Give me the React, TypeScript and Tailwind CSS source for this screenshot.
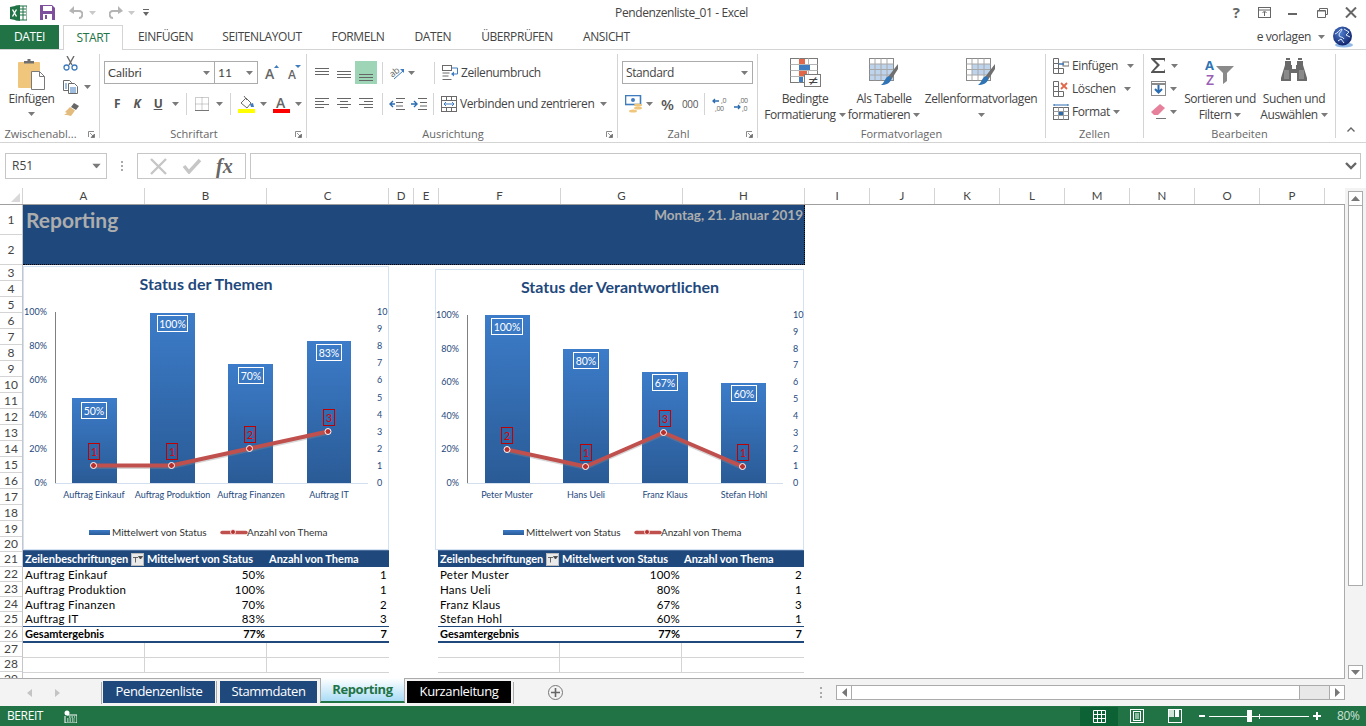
import type { ReactNode } from "react";

// ───── small helpers ─────
function Caret({ className = "" }: { className?: string }) {
  return (
    <svg width="7" height="4" viewBox="0 0 7 4" className={`shrink-0 ${className}`}>
      <path d="M0 0h7L3.5 4z" fill="#7a7a7a" />
    </svg>
  );
}

function Sep({ className = "" }: { className?: string }) {
  return <div className={`w-px h-[22px] bg-[#d4d4d4] shrink-0 ${className}`} />;
}

function Launcher() {
  return (
    <svg width="7" height="7" viewBox="0 0 7 7" className="shrink-0">
      <path d="M0.5 6V0.5H6" fill="none" stroke="#8a8a8a" />
      <path d="M2 2l3.5 3.5M6.5 3v3.5H3z" fill="#6a6a6a" stroke="#6a6a6a" strokeWidth="0.7" />
    </svg>
  );
}

function Lines({ rows, className = "" }: { rows: [number, number, number][]; className?: string }) {
  return (
    <svg width="14" height="16" viewBox="0 0 14 16" className={`shrink-0 ${className}`}>
      {rows.map(([a, b, y], i) => (
        <line key={i} x1={a} x2={b} y1={y + 0.5} y2={y + 0.5} stroke="#666" />
      ))}
    </svg>
  );
}

// ───── ribbon icons ─────
function PasteIcon() {
  return (
    <svg width="30" height="34" viewBox="0 0 30 34">
      <rect x="1" y="4" width="22" height="26" rx="1" fill="#efc67b" />
      <path d="M7 5V3h3.5V1h3v2H17v2.5H7z" fill="#6f6f6f" />
      <path d="M14.5 13.5h8l5 5v13h-13z" fill="#fff" stroke="#7a7a7a" />
      <path d="M22.5 13.5v5h5" fill="none" stroke="#7a7a7a" />
    </svg>
  );
}
function CutIcon() {
  return (
    <svg width="15" height="15" viewBox="0 0 15 15">
      <path d="M4 0l5 9M11 0L6 9" stroke="#6a6a6a" strokeWidth="1.4" fill="none" />
      <circle cx="3.5" cy="11.5" r="2.5" fill="none" stroke="#3f7cbf" strokeWidth="1.3" />
      <circle cx="11.5" cy="11.5" r="2.5" fill="none" stroke="#3f7cbf" strokeWidth="1.3" />
    </svg>
  );
}
function CopyIcon() {
  return (
    <svg width="15" height="14" viewBox="0 0 15 14">
      <path d="M.5.5h6l2 2v8h-8z" fill="#fff" stroke="#6a6a6a" />
      <path d="M5.5 3.5h6l3 3v7h-9z" fill="#fff" stroke="#6a6a6a" />
      <path d="M2 4h2M2 6h2M2 8h2M7 8h6M7 10h6M7 12h6" stroke="#3f7cbf" />
    </svg>
  );
}
function BrushIcon() {
  return (
    <svg width="17" height="14" viewBox="0 0 17 14">
      <path d="M11 0l5 3-3 4-5-3z" fill="#666" />
      <path d="M7 4l5 3.5L8 13 4 12l-3 0 3-2-2-1z" fill="#e3bc7d" />
    </svg>
  );
}
function GrowIcon({ up }: { up: boolean }) {
  return (
    <svg width="14" height="15" viewBox="0 0 14 15" className="overflow-visible">
      {up ? <path d="M9 3l2.5-3L14 3z" fill="#3f7cbf" /> : <path d="M8 0h6l-3 3z" fill="#3f7cbf" />}
      <text x={up ? 0 : 1} y="14" fontSize={up ? 14 : 12} fontWeight="600" fill="#666" fontFamily="Open Sans, sans-serif">A</text>
    </svg>
  );
}
function BordersIcon() {
  return (
    <svg width="14" height="14" viewBox="0 0 14 14">
      <rect x=".5" y=".5" width="13" height="13" fill="none" stroke="#9a9a9a" strokeDasharray="1 1" />
      <path d="M7 .5v13M.5 7h13" stroke="#9a9a9a" strokeDasharray="1 1" />
      <path d="M0 13.5h14" stroke="#777" />
    </svg>
  );
}
function FillIcon() {
  return (
    <svg width="17" height="17" viewBox="0 0 17 17">
      <path d="M3 7l5-5 5 5-4 5z" fill="#fff" stroke="#6a6a6a" />
      <path d="M6 0l3 4" stroke="#6a6a6a" />
      <path d="M12 8l3-1 1 4h-3z" fill="#3f7cbf" />
      <rect y="13" width="17" height="4" fill="#ffff00" />
    </svg>
  );
}
function ColorAIcon() {
  return (
    <svg width="17" height="17" viewBox="0 0 17 17" className="overflow-visible">
      <text x="3" y="12" fontSize="14" fontWeight="600" fill="#666" fontFamily="Open Sans, sans-serif">A</text>
      <rect y="13" width="17" height="4" fill="#ff0000" />
    </svg>
  );
}
function OrientIcon() {
  return (
    <svg width="16" height="16" viewBox="0 0 16 16" className="overflow-visible">
      <text x="1" y="10" fontSize="9" fill="#666" transform="rotate(-38 6 8)" fontFamily="Open Sans, sans-serif">ab</text>
      <path d="M5 14l9-8" stroke="#3f7cbf" />
      <path d="M11 4h4v4z" fill="#3f7cbf" />
    </svg>
  );
}
function IndentIcon({ right }: { right?: boolean }) {
  return (
    <svg width="16" height="12" viewBox="0 0 16 12">
      <path d={right ? "M7 .5h9M9 4.5h7M9 8h7M7 11.5h9" : "M7 .5h9M7 4.5h7M7 8h7M7 11.5h9"} stroke="#666" />
      {right ? (
        <path d="M0 6h5M3 3l3 3-3 3" stroke="#2b6cb0" strokeWidth="1.4" fill="none" />
      ) : (
        <path d="M6 6H1M4 3L1 6l3 3" stroke="#2b6cb0" strokeWidth="1.4" fill="none" />
      )}
    </svg>
  );
}
function WrapIcon() {
  return (
    <svg width="16" height="16" viewBox="0 0 16 16">
      <rect x=".5" y=".5" width="9" height="5" fill="#fff" stroke="#6a6a6a" />
      <path d="M.5 8h7M.5 11h6M.5 14.5h9" stroke="#6a6a6a" />
      <path d="M10 3h5.5v6H10" fill="none" stroke="#3f7cbf" />
      <path d="M12 6.5L9 9l3 2.5z" fill="#3f7cbf" />
    </svg>
  );
}
function MergeIcon() {
  return (
    <svg width="16" height="16" viewBox="0 0 16 16">
      <rect x=".5" y=".5" width="15" height="15" fill="#fff" stroke="#6a6a6a" />
      <path d="M.5 4.5h15M.5 11.5h15M5.5.5v4M10.5.5v4M5.5 11.5v4M10.5 11.5v4" stroke="#6a6a6a" />
      <path d="M3 8h10M5 6L3 8l2 2M11 6l2 2-2 2" stroke="#3f7cbf" fill="none" />
    </svg>
  );
}
function CurrencyIcon() {
  return (
    <svg width="17" height="18" viewBox="0 0 17 18">
      <rect x=".5" y=".5" width="15" height="9" fill="#fff" stroke="#3f7cbf" strokeWidth="1.6" />
      <circle cx="8" cy="5" r="2" fill="#3f7cbf" />
      <ellipse cx="13" cy="10" rx="4" ry="1.6" fill="#efc67b" />
      <ellipse cx="13" cy="13" rx="4" ry="1.6" fill="#efc67b" />
      <ellipse cx="8" cy="16" rx="4" ry="1.6" fill="#efc67b" />
    </svg>
  );
}
function DecimalIcon({ more }: { more?: boolean }) {
  return (
    <svg width="15" height="15" viewBox="0 0 15 15" className="overflow-visible">
      {more ? (
        <>
          <text x="5" y="6" fontSize="7" fill="#666" fontFamily="Open Sans, sans-serif">,00</text>
          <text x="8" y="14" fontSize="7" fill="#666" fontFamily="Open Sans, sans-serif">,0</text>
          <path d="M0 10h6M4 8l2 2-2 2" stroke="#2b6cb0" strokeWidth="1.3" fill="none" />
        </>
      ) : (
        <>
          <text x="9" y="6" fontSize="7" fill="#666" fontFamily="Open Sans, sans-serif">,0</text>
          <text x="3" y="14" fontSize="7" fill="#666" fontFamily="Open Sans, sans-serif">,00</text>
          <path d="M7 4H1M3 2L1 4l2 2" stroke="#2b6cb0" strokeWidth="1.3" fill="none" />
        </>
      )}
    </svg>
  );
}
function CondFormatIcon() {
  return (
    <svg width="31" height="29" viewBox="0 0 31 29" className="overflow-visible">
      <rect x=".5" y=".5" width="27" height="24" fill="#fff" stroke="#7a7a7a" />
      <path d="M9.5 .5v24M18.5 .5v24M.5 6.5h27M.5 12.5h27M.5 18.5h27" stroke="#b5b5b5" />
      <rect x="9" y="1" width="6" height="5" fill="#e0674a" />
      <rect x="9" y="7" width="11" height="5" fill="#3f7cbf" />
      <rect x="9" y="13" width="8" height="5" fill="#e0674a" />
      <rect x="9" y="19" width="4" height="5" fill="#3f7cbf" />
      <rect x="14.5" y="16.5" width="16" height="12" fill="#fff" stroke="#7a7a7a" />
      <text x="18" y="27" fontSize="13" fill="#444" fontFamily="DejaVu Sans, sans-serif">≠</text>
    </svg>
  );
}
function TableStyleIcon({ second }: { second?: boolean }) {
  return (
    <svg width="30" height="28" viewBox="0 0 30 28">
      <rect x=".5" y=".5" width="24" height="22" fill="#fff" stroke="#8a8a8a" />
      {second ? (
        <rect x="6" y="6" width="18" height="11" fill="#bed3ec" />
      ) : (
        <rect x="1" y="6" width="23" height="16" fill="#bed3ec" />
      )}
      <path d="M6 .5v22M12 .5v22M18 .5v22M.5 6h24M.5 11.5h24M.5 17h24" stroke="#a8a8a8" />
      <path d="M29 6l-10 13 3 3L29 11z" fill="#6f6f6f" />
      <path d="M18 19c3-2 5 1 4 3-1 3-5 5-10 5 3-2 4-6 6-8z" fill="#2f75b5" />
    </svg>
  );
}
function CellsIcon({ kind }: { kind: "insert" | "delete" | "format" }) {
  return (
    <svg width="16" height="16" viewBox="0 0 16 16">
      {kind === "format" ? (
        <>
          <rect x=".5" y="3.5" width="15" height="12" fill="#fff" stroke="#6a6a6a" />
          <path d="M5.5 3.5v12M10.5 3.5v12M.5 7.5h15M.5 11.5h15" stroke="#9a9a9a" />
          <rect x="6" y="8" width="4" height="3" fill="#2b6cb0" />
          <path d="M1 1h14M1 0v2M15 0v2" stroke="#2b6cb0" />
        </>
      ) : (
        <>
          <path d="M.5.5h5v5h-5zM.5 5.5h5v5h-5zM.5 10.5h5v5h-5zM5.5 10.5h5v5h-5z" fill="#fff" stroke="#6a6a6a" />
          {kind === "insert" ? (
            <>
              <rect x="10" y="4" width="6" height="4" fill="#fff" stroke="#6a6a6a" />
              <path d="M6 6h5" stroke="#2b6cb0" strokeWidth="1.4" />
            </>
          ) : (
            <path d="M8 2l6 6M14 2L8 8" stroke="#e0674a" strokeWidth="1.8" />
          )}
        </>
      )}
    </svg>
  );
}
function SumIcon() {
  return (
    <svg width="15" height="15" viewBox="0 0 15 15">
      <path d="M0 0h14v4l-1-2H4l5 5-6 6h10l1-2v4H0v-1l6-7-6-6z" fill="#555" />
    </svg>
  );
}
function FillDownIcon() {
  return (
    <svg width="15" height="15" viewBox="0 0 15 15">
      <rect x=".5" y=".5" width="14" height="14" fill="#fff" stroke="#8a8a8a" />
      <path d="M.5 3h14" stroke="#8a8a8a" strokeWidth="2" />
      <path d="M7.5 4v7M4 8l3.5 3.5L11 8" stroke="#2b6cb0" strokeWidth="2" fill="none" />
    </svg>
  );
}
function EraserIcon() {
  return (
    <svg width="15" height="15" viewBox="0 0 15 15">
      <path d="M9 0l5 4-7 7H3L0 8z" fill="#e7819b" />
      <path d="M5 14.5h10" stroke="#777" />
    </svg>
  );
}
function SortIcon() {
  return (
    <svg width="30" height="28" viewBox="0 0 30 28" className="overflow-visible">
      <text x="0" y="12" fontSize="13" fontWeight="700" fill="#2f75b5" fontFamily="Open Sans, sans-serif">A</text>
      <text x="1" y="27" fontSize="14" fontWeight="600" fill="#9a5fb5" fontFamily="Open Sans, sans-serif">Z</text>
      <path d="M11 8h18l-7 7v8l-4 3V15z" fill="#8a8a8a" />
    </svg>
  );
}
function BinocularsIcon() {
  return (
    <svg width="26" height="24" viewBox="0 0 26 24" fill="#6a6a6a">
      <path d="M4 3h6v4h1v4h4V7h1V3h6v4l4 13v3H16v-8h-6v8H0v-3L4 7z" />
      <path d="M5 0h4v2H5zM17 0h4v2h-4z" />
      <path d="M3 12h5v9H3zM18 12h5v9h-5z" fill="#8a8a8a" />
    </svg>
  );
}
function GlobeIcon() {
  return (
    <svg width="22" height="22" viewBox="0 0 22 22">
      <defs>
        <radialGradient id="globe" cx="40%" cy="35%" r="70%">
          <stop offset="0" stopColor="#4f7fd0" />
          <stop offset="1" stopColor="#0f1f66" />
        </radialGradient>
      </defs>
      <ellipse cx="12" cy="19" rx="9" ry="2.5" fill="#8fb8e8" />
      <circle cx="10.5" cy="10" r="9.5" fill="url(#globe)" />
      <path d="M3 8c3-1 4-4 7-5 0 3-3 3-3 6s4 1 5 4M12 3l5 3-3 3 4 2M6 15l3-2 3 4" fill="none" stroke="#dfe9f8" strokeWidth="1" />
    </svg>
  );
}

// ───── title bar + tabs ─────
function TitleBar() {
  return (
    <div className="h-[25px] flex items-center relative shrink-0">
      <svg width="17" height="16" viewBox="0 0 17 16" className="ml-[10px]">
        <rect x="6" y="1" width="11" height="14" fill="#fff" stroke="#217346" />
        <path d="M10 4h6M10 7h6M10 10h6M13 1v14" stroke="#217346" />
        <path d="M0 2l10-2v16L0 14z" fill="#217346" />
        <path d="M2.5 4.5l4 7M6.5 4.5l-4 7" stroke="#fff" strokeWidth="1.4" />
      </svg>
      <svg width="15" height="15" viewBox="0 0 15 15" className="ml-[13px]">
        <path d="M0 0h12l3 3v12H0z" fill="#7d4f9d" />
        <rect x="3" y="1" width="9" height="5" fill="#fff" />
        <rect x="3" y="9" width="9" height="6" fill="#fff" />
        <rect x="5" y="10" width="2" height="4" fill="#7d4f9d" />
      </svg>
      <svg width="14" height="13" viewBox="0 0 14 13" className="ml-[14px]">
        <path d="M3 5h7c5 0 4 7 0 7" fill="none" stroke="#b4b4b4" strokeWidth="2" />
        <path d="M0 5l5-5v8z" fill="#b4b4b4" />
      </svg>
      <Caret className="ml-[6px] opacity-40" />
      <svg width="14" height="13" viewBox="0 0 14 13" className="ml-[13px]">
        <path d="M11 5H4c-5 0-4 7 0 7" fill="none" stroke="#b4b4b4" strokeWidth="2" />
        <path d="M14 5L9 0v8z" fill="#b4b4b4" />
      </svg>
      <Caret className="ml-[5px] opacity-40" />
      <svg width="6" height="7" viewBox="0 0 6 7" className="ml-[8px]">
        <path d="M0 0h6v1H0zM0 3h6L3 7z" fill="#666" />
      </svg>
      <div className="absolute left-0 right-0 top-0 h-[25px] flex items-center justify-center pr-[3px] text-[12px] tracking-[-0.4px] text-[#444] pointer-events-none">
        Pendenzenliste_01 - Excel
      </div>
      <div className="ml-auto flex items-center pr-[9px]">
        <span className="text-[15px] font-bold text-[#666] leading-none">?</span>
        <svg width="13" height="11" viewBox="0 0 13 11" className="ml-[18px]">
          <rect x=".5" y=".5" width="12" height="10" fill="none" stroke="#666" />
          <path d="M.5 3h12" stroke="#666" />
          <path d="M6.5 9V5M4.5 6l2-2 2 2" stroke="#666" fill="none" />
        </svg>
        <div className="ml-[17px] w-[9px] h-[2px] bg-[#666] mt-[3px]" />
        <svg width="11" height="10" viewBox="0 0 11 10" className="ml-[20px]">
          <path d="M2.5 2.5V.5h8v6h-2M.5 2.5h8v7h-8z" fill="none" stroke="#666" />
          <path d="M.5 3h8" stroke="#666" />
        </svg>
        <svg width="12" height="11" viewBox="0 0 12 11" className="ml-[17px]">
          <path d="M1 .5l10 10M11 .5L1 10.5" stroke="#666" strokeWidth="2" />
        </svg>
      </div>
    </div>
  );
}

const tabs: [string, string][] = [
  ["EINFÜGEN", "ml-[15px]"],
  ["SEITENLAYOUT", "ml-[29px]"],
  ["FORMELN", "ml-[30px]"],
  ["DATEN", "ml-[30px]"],
  ["ÜBERPRÜFEN", "ml-[30px]"],
  ["ANSICHT", "ml-[30px]"],
];

function RibbonTabs() {
  return (
    <div className="h-[25px] flex items-stretch border-b border-[#d4d4d4] text-[12px] tracking-[-0.4px] text-[#444] shrink-0 relative">
      <div className="w-[59px] bg-[#217346] text-white flex items-center justify-center">DATEI</div>
      <div className="ml-[4px] w-[60px] h-[25px] bg-white border border-b-0 border-[#d4d4d4] text-[#217346] flex items-center justify-center">START</div>
      {tabs.map(([t, m]) => (
        <div key={t} className={`flex items-center ${m}`}>{t}</div>
      ))}
      <div className="ml-auto flex items-center pr-[12px]">
        e vorlagen
        <Caret className="ml-[7px] mr-[7px]" />
        <GlobeIcon />
      </div>
    </div>
  );
}

// ───── ribbon groups ─────
function Group({ w, label, launcher, children }: { w: string; label: string; launcher?: ReactNode; children: ReactNode }) {
  return (
    <div className={`${w} h-[84px] border-r border-[#d4d4d4] flex flex-col shrink-0`}>
      <div className="h-[72px] overflow-visible">{children}</div>
      <div className={`h-[12px] leading-[16px] text-[11px] tracking-normal text-[#666] flex justify-center relative ${launcher ? "pr-[18px]" : ""}`}>
        <span>{label}</span>
        {launcher && <div className="absolute right-[4px] top-[5px]">{launcher}</div>}
      </div>
    </div>
  );
}

function BigButton({ w, icon, l1, l2, caretBelow }: { w: string; icon: ReactNode; l1: string; l2?: string; caretBelow?: boolean }) {
  return (
    <div className={`${w} flex flex-col items-center pt-[4px] shrink-0`}>
      <div className="h-[33px] flex items-start justify-center">{icon}</div>
      <div className="leading-[16px] whitespace-nowrap">{l1}</div>
      {caretBelow ? (
        <Caret className="mt-[6px]" />
      ) : (
        <div className="leading-[16px] whitespace-nowrap flex items-center">
          {l2}
          <Caret className="ml-[3px]" />
        </div>
      )}
    </div>
  );
}

function Ribbon() {
  return (
    <div className="h-[93px] border-b border-[#d4d4d4] flex pt-[4px] text-[12px] tracking-[-0.4px] text-[#444] shrink-0">
      <Group w="w-[100px]" label="Zwischenabl..." launcher={<Launcher />}>
        <div className="flex">
          <div className="w-[63px] flex flex-col items-center pt-[4px]">
            <PasteIcon />
            <div className="leading-[16px] -mt-px">Einfügen</div>
            <Caret className="mt-[5px]" />
          </div>
          <div className="flex flex-col pt-[2px] gap-[9px]">
            <CutIcon />
            <div className="flex items-center">
              <CopyIcon />
              <Caret className="ml-[6px]" />
            </div>
            <BrushIcon />
          </div>
        </div>
      </Group>

      <Group w="w-[207px]" label="Schriftart" launcher={<Launcher />}>
        <div className="pl-[4px] pt-[7px]">
          <div className="flex items-center h-[23px]">
            <div className="w-[111px] h-[23px] border border-[#ababab] flex items-center pl-[3px] pr-[4px] justify-between font-['Lato',sans-serif] tracking-normal">
              Calibri <Caret />
            </div>
            <div className="w-[44px] h-[23px] -ml-px border border-[#ababab] flex items-center pl-[3px] pr-[4px] justify-between font-['Lato',sans-serif] tracking-normal">
              11 <Caret />
            </div>
            <div className="ml-[7px]"><GrowIcon up /></div>
            <div className="ml-[8px]"><GrowIcon up={false} /></div>
          </div>
          <div className="flex items-center h-[18px] mt-[11px]">
            <span className="ml-[8px] w-[10px] text-center font-bold text-[#555]">F</span>
            <span className="ml-[10px] w-[10px] text-center font-bold italic text-[#555]">K</span>
            <span className="ml-[11px] w-[10px] text-center font-bold underline text-[#555]">U</span>
            <Caret className="ml-[9px]" />
            <Sep className="ml-[7px]" />
            <div className="ml-[8px] flex"><BordersIcon /></div>
            <Caret className="ml-[7px]" />
            <Sep className="ml-[7px]" />
            <div className="ml-[7px] flex"><FillIcon /></div>
            <Caret className="ml-[5px]" />
            <div className="ml-[6px] flex"><ColorAIcon /></div>
            <Caret className="ml-[5px]" />
          </div>
        </div>
      </Group>

      <Group w="w-[311px]" label="Ausrichtung" launcher={<Launcher />}>
        <div className="pl-[8px] pt-[7px]">
          <div className="flex items-center h-[23px]">
            <Lines rows={[[0, 14, 3], [0, 14, 6], [0, 14, 9]]} />
            <Lines className="ml-[8px]" rows={[[0, 14, 6], [0, 14, 9], [0, 14, 12]]} />
            <div className="ml-[4px] w-[22px] h-[23px] bg-[#9fd5b7] flex items-center justify-center">
              <Lines rows={[[0, 14, 9], [0, 14, 12], [0, 14, 15]]} />
            </div>
            <Sep className="ml-[5px]" />
            <div className="ml-[6px] flex"><OrientIcon /></div>
            <Caret className="ml-[3px]" />
            <Sep className="ml-[19px]" />
            <div className="ml-[7px] flex"><WrapIcon /></div>
            <span className="ml-[3px]">Zeilenumbruch</span>
          </div>
          <div className="flex items-center h-[18px] mt-[11px]">
            <Lines rows={[[0, 14, 2], [0, 9, 5], [0, 14, 8], [0, 9, 11]]} />
            <Lines className="ml-[8px]" rows={[[0, 14, 2], [3, 11, 5], [0, 14, 8], [3, 11, 11]]} />
            <Lines className="ml-[8px]" rows={[[0, 14, 2], [5, 14, 5], [0, 14, 8], [5, 14, 11]]} />
            <Sep className="ml-[9px]" />
            <div className="ml-[6px] flex"><IndentIcon /></div>
            <div className="ml-[6px] flex"><IndentIcon right /></div>
            <Sep className="ml-[6px]" />
            <div className="ml-[7px] flex"><MergeIcon /></div>
            <span className="ml-[3px] w-[137px] whitespace-nowrap">Verbinden und zentrieren</span>
            <Caret className="ml-[3px]" />
          </div>
        </div>
      </Group>

      <Group w="w-[140px]" label="Zahl" launcher={<Launcher />}>
        <div className="pl-[4px] pt-[7px]">
          <div className="w-[131px] h-[23px] border border-[#ababab] flex items-center pl-[3px] pr-[4px] justify-between">
            Standard <Caret />
          </div>
          <div className="flex items-center h-[18px] mt-[11px]">
            <div className="ml-[3px] flex"><CurrencyIcon /></div>
            <Caret className="ml-[4px]" />
            <span className="ml-[8px] text-[15px] font-semibold text-[#555] w-[14px]">%</span>
            <span className="ml-[7px] text-[10px] text-[#555] w-[15px]">000</span>
            <Sep className="ml-[7px]" />
            <div className="ml-[7px] flex"><DecimalIcon /></div>
            <div className="ml-[7px] flex"><DecimalIcon more /></div>
          </div>
        </div>
      </Group>

      <Group w="w-[288px]" label="Formatvorlagen">
        <div className="flex pl-[5px]">
          <BigButton w="w-[84px]" icon={<CondFormatIcon />} l1="Bedingte" l2="Formatierung" />
          <BigButton w="w-[74px]" icon={<TableStyleIcon />} l1="Als Tabelle" l2="formatieren" />
          <BigButton w="w-[120px]" icon={<TableStyleIcon second />} l1="Zellenformatvorlagen" caretBelow />
        </div>
      </Group>

      <Group w="w-[98px]" label="Zellen">
        <div className="pl-[7px]">
          <div className="h-[23px] flex items-center">
            <CellsIcon kind="insert" /><span className="ml-[3px] w-[47px]">Einfügen</span><Caret className="ml-[8px]" />
          </div>
          <div className="h-[23px] flex items-center">
            <CellsIcon kind="delete" /><span className="ml-[3px] w-[44px]">Löschen</span><Caret className="ml-[8px]" />
          </div>
          <div className="h-[23px] flex items-center">
            <CellsIcon kind="format" /><span className="ml-[3px]">Format</span><Caret className="ml-[3px]" />
          </div>
        </div>
      </Group>

      <Group w="w-[192px]" label="Bearbeiten">
        <div className="flex">
          <div className="w-[36px] pl-[7px] shrink-0">
            <div className="h-[23px] flex items-center"><SumIcon /><Caret className="ml-[5px]" /></div>
            <div className="h-[23px] flex items-center"><FillDownIcon /><Caret className="ml-[4px]" /></div>
            <div className="h-[23px] flex items-center"><EraserIcon /><Caret className="ml-[4px]" /></div>
          </div>
          <BigButton w="w-[80px]" icon={<SortIcon />} l1="Sortieren und" l2="Filtern" />
          <BigButton w="w-[68px]" icon={<BinocularsIcon />} l1="Suchen und" l2="Auswählen" />
        </div>
      </Group>

      <div className="flex-1 flex items-end justify-center pb-[6px] h-[84px]">
        <svg width="8" height="5" viewBox="0 0 8 5"><path d="M.5 4.5L4 1l3.5 3.5" fill="none" stroke="#666" strokeWidth="1.4" /></svg>
      </div>
    </div>
  );
}

function FormulaBar() {
  return (
    <div className="h-[45px] pt-[10px] pl-[5px] pr-[5px] flex shrink-0">
      <div className="w-[102px] h-[26px] border border-[#c6c6c6] flex items-center justify-between pl-[6px] pr-[6px] text-[12px] text-[#444]">
        R51
        <Caret className="scale-125" />
      </div>
      <div className="w-[30px] h-[26px] flex items-center justify-center">
        <div className="w-[2px] h-[10px] border-l-2 border-dotted border-[#aaa]" />
      </div>
      <div className="w-[109px] h-[26px] border border-[#c6c6c6] flex items-center justify-around px-[5px]">
        <svg width="17" height="17" viewBox="0 0 17 17"><path d="M1 1l15 15M16 1L1 16" stroke="#c6c6c6" strokeWidth="2.4" /></svg>
        <svg width="20" height="16" viewBox="0 0 20 16"><path d="M2 8l5 6L18 2" fill="none" stroke="#c6c6c6" strokeWidth="3.4" /></svg>
        <span className="font-['Liberation_Serif',serif] italic font-bold text-[20px] text-[#666] leading-none">fx</span>
      </div>
      <div className="ml-[4px] flex-1 h-[26px] border border-[#c6c6c6] flex items-center justify-end pr-[3px]">
        <svg width="12" height="8" viewBox="0 0 12 8"><path d="M1 1l5 5 5-5" fill="none" stroke="#666" strokeWidth="2.4" /></svg>
      </div>
    </div>
  );
}

// ───── column headers ─────
const columns: [string, string][] = [
  ["A", "w-[122px]"], ["B", "w-[122px]"], ["C", "w-[122px]"], ["D", "w-[25px]"], ["E", "w-[25px]"],
  ["F", "w-[122px]"], ["G", "w-[122px]"], ["H", "w-[122px]"], ["I", "w-[65px]"], ["J", "w-[65px]"],
  ["K", "w-[65px]"], ["L", "w-[65px]"], ["M", "w-[65px]"], ["N", "w-[65px]"], ["O", "w-[65px]"], ["P", "w-[65px]"],
];

function ColumnHeaders() {
  return (
    <div className="h-[17px] flex border-b border-[#9f9f9f] font-['Lato',sans-serif] text-[11.5px] text-[#444] shrink-0">
      <div className="w-[23px] border-r border-[#d4d4d4] flex items-end justify-end pr-[2px] pb-[2px] shrink-0">
        <svg width="9" height="9" viewBox="0 0 9 9"><path d="M9 0v9H0z" fill="#d9d9d9" /></svg>
      </div>
      {columns.map(([c, w]) => (
        <div key={c} className={`${w} border-r border-[#d4d4d4] flex items-center justify-center shrink-0`}>{c}</div>
      ))}
    </div>
  );
}

function RowHeaders() {
  const heights = (i: number) => {
    if (i <= 2) return "h-[30px]";
    if (i >= 20) return "h-[15px]";
    return "h-[16px]";
  };
  return (
    <div className="w-[23px] shrink-0 border-r border-[#c6c6c6] font-['Lato',sans-serif] text-[12px] text-[#444] overflow-hidden">
      {Array.from({ length: 29 }, (_, k) => k + 1).map((i) => (
        <div key={i} className={`${heights(i)} border-b border-[#d4d4d4] flex items-center justify-center`}>{i}</div>
      ))}
    </div>
  );
}

// ───── charts ─────
type ChartSpec = {
  id: string;
  x: number; y: number; w: number; h: number;
  title: string; titleX: number; titleY: number;
  axisX: number; endX: number; top: number; base: number;
  leftX: number; rightX: number;
  bars: { x: number; w: number; top: number; label: string; lx: number; lw: number; ly: number; name: string; nameX: number; px: number; py: number; n: number; cx: number; cy: number }[];
  legend: { swatch: number; text: number; line: number; text2: number };
};

function Chart({ s }: { s: ChartSpec }) {
  const step = (s.base - s.top) / 5;
  const rstep = (s.base - s.top) / 10;
  return (
    <svg
      width={s.w}
      height={s.h}
      viewBox={`${s.x} ${s.y} ${s.w} ${s.h}`}
      className="block font-['Lato',sans-serif]"
    >
      <defs>
        <linearGradient id={s.id} x1="0" y1="0" x2="0" y2="1">
          <stop offset="0" stopColor="#3c7cc9" />
          <stop offset="1" stopColor="#2a5b96" />
        </linearGradient>
      </defs>
      <rect x={s.x + 0.5} y={s.y + 0.5} width={s.w - 1} height={s.h - 1} fill="#fff" stroke="#d3e2f3" />
      <text x={s.titleX} y={s.titleY} textAnchor="middle" fontSize="16" fontWeight="700" fill="#1f497d">{s.title}</text>
      {[0, 1, 2, 3, 4, 5].map((i) => (
        <text key={i} x={s.leftX} y={s.base - i * step + 3} textAnchor="end" fontSize="9" fill="#1f497d">{i * 20}%</text>
      ))}
      {Array.from({ length: 11 }, (_, i) => (
        <text key={i} x={s.rightX} y={s.base - i * rstep + 3} fontSize="9" fill="#1f497d">{i}</text>
      ))}
      {s.bars.map((b) => (
        <g key={b.name}>
          <rect x={b.x} y={b.top} width={b.w} height={s.base - b.top} fill={`url(#${s.id})`} />
          <rect x={b.lx + 0.5} y={b.ly + 0.5} width={b.lw} height={16} fill="none" stroke="#fff" />
          <text x={b.lx + b.lw / 2 + 0.5} y={b.ly + 12.5} textAnchor="middle" fontSize="10.5" fill="#fff">{b.label}</text>
          <text x={b.nameX} y={s.base + 15} textAnchor="middle" fontSize="9" fill="#1f497d">{b.name}</text>
        </g>
      ))}
      <line x1={s.axisX + 0.5} x2={s.axisX + 0.5} y1={s.top} y2={s.base} stroke="#808080" />
      <line x1={s.axisX} x2={s.endX} y1={s.base + 0.5} y2={s.base + 0.5} stroke="#d3dfee" />
      <polyline points={s.bars.map((b) => `${b.px},${b.py + 1.5}`).join(" ")} fill="none" stroke="#8a8a8a" strokeOpacity="0.35" strokeWidth="4" />
      <polyline points={s.bars.map((b) => `${b.px},${b.py}`).join(" ")} fill="none" stroke="#c0504d" strokeWidth="4" strokeLinecap="round" strokeLinejoin="round" />
      {s.bars.map((b) => (
        <g key={b.name + "m"}>
          <circle cx={b.px} cy={b.py} r="3" fill="#b8302e" stroke="#fff" />
          <rect x={b.cx + 0.5} y={b.cy + 0.5} width="11" height="16" fill="none" stroke="#c00000" />
          <text x={b.cx + 6} y={b.cy + 12.5} textAnchor="middle" fontSize="10.5" fill="#e00000">{b.n}</text>
        </g>
      ))}
      <rect x={s.legend.swatch} y={530} width={21} height={5} fill={`url(#${s.id})`} />
      <text x={s.legend.text} y={535.5} fontSize="10" fill="#333">Mittelwert von Status</text>
      <line x1={s.legend.line} x2={s.legend.line + 24} y1={532.5} y2={532.5} stroke="#c0504d" strokeWidth="3.4" strokeLinecap="round" />
      <circle cx={s.legend.line + 11} cy={532} r="2.5" fill="#b8302e" stroke="#fff" strokeWidth="0.8" />
      <text x={s.legend.text2} y={535.5} fontSize="10" fill="#333">Anzahl von Thema</text>
    </svg>
  );
}

const themen: ChartSpec = {
  id: "barA", x: 23, y: 266, w: 366, h: 284,
  title: "Status der Themen", titleX: 206, titleY: 290,
  axisX: 55, endX: 368, top: 312, base: 483, leftX: 47, rightX: 377,
  bars: [
    { x: 72, w: 45, top: 398, label: "50%", lx: 81, lw: 25, ly: 402, name: "Auftrag Einkauf", nameX: 94, px: 93.5, py: 465.5, n: 1, cx: 88, cy: 443 },
    { x: 150, w: 45, top: 313, label: "100%", lx: 157, lw: 30, ly: 315, name: "Auftrag Produktion", nameX: 172.5, px: 171.5, py: 465.5, n: 1, cx: 166, cy: 443 },
    { x: 228, w: 45, top: 364, label: "70%", lx: 238, lw: 25, ly: 367, name: "Auftrag Finanzen", nameX: 251, px: 249.5, py: 448.5, n: 2, cx: 244, cy: 426 },
    { x: 307, w: 44, top: 341, label: "83%", lx: 316, lw: 25, ly: 344, name: "Auftrag IT", nameX: 329, px: 328, py: 431.5, n: 3, cx: 323, cy: 409 },
  ],
  legend: { swatch: 89, text: 112, line: 222, text2: 247 },
};

const verantwortliche: ChartSpec = {
  id: "barB", x: 435, y: 269, w: 369, h: 281,
  title: "Status der Verantwortlichen", titleX: 620, titleY: 293,
  axisX: 467, endX: 783, top: 315, base: 483, leftX: 459, rightX: 793,
  bars: [
    { x: 485, w: 45, top: 315, label: "100%", lx: 491, lw: 31, ly: 318, name: "Peter Muster", nameX: 507, px: 507, py: 449.5, n: 2, cx: 501, cy: 427 },
    { x: 563, w: 46, top: 349, label: "80%", lx: 573, lw: 25, ly: 352, name: "Hans Ueli", nameX: 586, px: 585.5, py: 466.5, n: 1, cx: 580, cy: 444 },
    { x: 642, w: 46, top: 372, label: "67%", lx: 652, lw: 25, ly: 374, name: "Franz Klaus", nameX: 665, px: 663.5, py: 432.5, n: 3, cx: 659, cy: 410 },
    { x: 721, w: 45, top: 383, label: "60%", lx: 731, lw: 25, ly: 385, name: "Stefan Hohl", nameX: 744, px: 742.5, py: 466.5, n: 1, cx: 737, cy: 444 },
  ],
  legend: { swatch: 503, text: 526, line: 636, text2: 661 },
};

// ───── pivot tables ─────
type Pivot = { rows: [string, string, number][]; total: [string, string, number] };

const pivotA: Pivot = {
  rows: [["Auftrag Einkauf", "50%", 1], ["Auftrag Produktion", "100%", 1], ["Auftrag Finanzen", "70%", 2], ["Auftrag IT", "83%", 3]],
  total: ["Gesamtergebnis", "77%", 7],
};
const pivotB: Pivot = {
  rows: [["Peter Muster", "100%", 2], ["Hans Ueli", "80%", 1], ["Franz Klaus", "67%", 3], ["Stefan Hohl", "60%", 1]],
  total: ["Gesamtergebnis", "77%", 7],
};

function PivotTable({ p }: { p: Pivot }) {
  return (
    <div className="w-[366px] shrink-0 text-[11.5px] text-black font-['Lato',sans-serif] tracking-[0.25px]">
      <div className="h-[17px] bg-[#1f497d] text-white text-[11px] font-bold flex items-center border-t border-[#4a6d9c] tracking-normal whitespace-nowrap">
        <div className="w-[122px] pl-[2px] flex items-center justify-between pr-[1px]">
          Zeilenbeschriftungen
          <svg width="13" height="13" viewBox="0 0 13 13" className="shrink-0">
            <rect x=".5" y=".5" width="12" height="12" fill="#eaeaea" stroke="#bbb" />
            <path d="M2 4.5h5M4.5 4.5v5M7.5 3.5h4l-2 2.5z" stroke="#444" fill="#444" strokeWidth="0.8" />
          </svg>
        </div>
        <div className="w-[122px] pl-[2px]">Mittelwert von Status</div>
        <div className="w-[122px] pl-[2px]">Anzahl von Thema</div>
      </div>
      {p.rows.map(([name, pct, n], i) => (
        <div key={name} className={`h-[15px] flex items-center ${i === p.rows.length - 1 ? "border-b border-[#1f497d]" : ""}`}>
          <div className="w-[122px] pl-[2px]">{name}</div>
          <div className="w-[122px] text-right pr-[2px]">{pct}</div>
          <div className="w-[122px] text-right pr-[2px]">{n}</div>
        </div>
      ))}
      <div className="h-[16px] flex items-center font-bold text-[11px] border-b-2 border-[#1f497d] tracking-normal">
        <div className="w-[122px] pl-[2px]">{p.total[0]}</div>
        <div className="w-[122px] text-right pr-[2px]">{p.total[1]}</div>
        <div className="w-[122px] text-right pr-[2px]">{p.total[2]}</div>
      </div>
      {[0, 1].map((k) => (
        <div key={k} className="h-[15px] flex border-b border-[#d4d4d4]">
          <div className="w-[122px] border-r border-[#d4d4d4]" />
          <div className="w-[122px] border-r border-[#d4d4d4]" />
        </div>
      ))}
    </div>
  );
}

// ───── bottom bars ─────
function SheetTabs() {
  return (
    <div className="h-[27px] bg-[#f3f3f3] flex items-start shrink-0 text-[13px] tracking-[-0.4px]">
      <svg width="5" height="8" viewBox="0 0 5 8" className="ml-[27px] mt-[10px]"><path d="M5 0v8L0 4z" fill="#c4c4c4" /></svg>
      <svg width="5" height="8" viewBox="0 0 5 8" className="ml-[23px] mt-[10px]"><path d="M0 0v8l5-4z" fill="#c4c4c4" /></svg>
      <div className="ml-[41px] mt-[3px] h-[22px] border-l border-[#ababab]" />
      <div className="ml-[1px] mt-[2px] w-[112px] h-[22px] bg-[#1f497d] text-white flex items-center justify-center">Pendenzenliste</div>
      <div className="ml-[1px] mt-[2px] h-[22px] border-l border-[#ababab]" />
      <div className="ml-[3px] mt-[2px] w-[97px] h-[22px] bg-[#1f497d] text-white flex items-center justify-center">Stammdaten</div>
      <div className="ml-[3px] -mt-px w-[85px] h-[25px] bg-gradient-to-b from-white to-[#a9dcf5] border-x border-[#ababab] border-b-2 border-b-[#217346] text-[#217346] font-bold flex items-center justify-center">Reporting</div>
      <div className="ml-[2px] mt-[2px] w-[104px] h-[22px] bg-black text-white flex items-center justify-center">Kurzanleitung</div>
      <div className="ml-[2px] mt-[3px] h-[22px] border-l border-[#ababab]" />
      <div className="ml-[34px] mt-[6px] w-[15px] h-[15px] rounded-full border border-[#777] flex items-center justify-center">
        <svg width="9" height="9" viewBox="0 0 9 9"><path d="M4.5 0v9M0 4.5h9" stroke="#666" strokeWidth="1.6" /></svg>
      </div>
      <div className="ml-[257px] mt-[8px] w-[2px] h-[11px] border-l-2 border-dotted border-[#aaa]" />
      <div className="ml-[14px] mt-[6px] w-[509px] h-[15px] border border-[#ababab] bg-[#e8e8e8] flex">
        <div className="w-[15px] border-r border-[#ababab] bg-white flex items-center justify-center">
          <svg width="5" height="9" viewBox="0 0 5 9"><path d="M5 0v9L0 4.5z" fill="#777" /></svg>
        </div>
        <div className="w-[448px] bg-white border-r border-[#ababab]" />
        <div className="ml-auto w-[15px] border-l border-[#ababab] bg-white flex items-center justify-center">
          <svg width="5" height="9" viewBox="0 0 5 9"><path d="M0 0v9l5-4.5z" fill="#777" /></svg>
        </div>
      </div>
    </div>
  );
}

function StatusBar() {
  return (
    <div className="h-[20px] bg-[#217346] text-white text-[12px] tracking-[-0.4px] flex items-center shrink-0">
      <span className="ml-[7px]">BEREIT</span>
      <svg width="13" height="13" viewBox="0 0 13 13" className="ml-[21px]">
        <circle cx="3" cy="3" r="2.5" fill="#fff" />
        <path d="M3 5h10v8H1V6" fill="none" stroke="#fff" />
        <path d="M5 7h6M3 9h8M3 11h8" stroke="#fff" strokeDasharray="1.5 1" />
      </svg>
      <div className="ml-auto flex items-center pr-[8px]">
        <div className="w-[38px] h-[19px] bg-[#0c6235] flex items-center justify-center">
          <svg width="13" height="13" viewBox="0 0 13 13"><path d="M.5.5h12v12H.5zM4.5.5v12M8.5.5v12M.5 4.5h12M.5 8.5h12" fill="none" stroke="#fff" /></svg>
        </div>
        <svg width="14" height="14" viewBox="0 0 14 14" className="ml-[12px]">
          <rect x=".5" y=".5" width="13" height="13" fill="none" stroke="#fff" />
          <rect x="3.5" y="2.5" width="7" height="9" fill="none" stroke="#fff" />
          <path d="M5 5h4M5 7h4M5 9h4" stroke="#fff" />
        </svg>
        <svg width="14" height="14" viewBox="0 0 14 14" className="ml-[24px]">
          <rect x=".5" y=".5" width="13" height="13" fill="none" stroke="#fff" />
          <rect x="1" y="1" width="5" height="7" fill="#cfe5d8" />
          <rect x="7" y="1" width="4" height="7" fill="#fff" />
        </svg>
        <div className="ml-[17px] w-[6px] h-[2px] bg-white" />
        <div className="ml-[4px] w-[100px] h-px bg-white relative flex items-center">
          <div className="absolute left-[38px] w-[5px] h-[12px] bg-white" />
          <div className="absolute left-[50px] w-px h-[5px] bg-white" />
        </div>
        <svg width="8" height="8" viewBox="0 0 8 8" className="ml-[4px]"><path d="M4 0v8M0 4h8" stroke="#fff" strokeWidth="2" /></svg>
        <span className="ml-[16px] w-[21px] text-[#cde0d4]">80%</span>
      </div>
    </div>
  );
}

export default function App() {
  return (
    <div className="w-[1366px] h-[726px] flex flex-col overflow-hidden bg-white font-['Open_Sans',sans-serif]">
      <TitleBar />
      <RibbonTabs />
      <Ribbon />
      <FormulaBar />
      <div className="h-[491px] flex shrink-0">
        <div className="w-[1345px] flex flex-col shrink-0">
          <ColumnHeaders />
          <div className="h-[474px] flex overflow-hidden border-b border-r border-[#ababab]">
            <RowHeaders />
            <div className="w-[782px] shrink-0 flex flex-col">
              <div className="h-[60px] bg-[#1f497d] border-b border-r border-dotted border-black flex justify-between font-['Lato',sans-serif] font-bold text-[#adadad] shrink-0">
                <span className="text-[21px] leading-[30px] pl-[3px]">Reporting</span>
                <span className="text-[13.5px] leading-[20px] pr-[1px]">Montag, 21. Januar 2019</span>
              </div>
              <div className="h-[285px] flex items-start pt-px shrink-0">
                <Chart s={themen} />
                <div className="ml-[46px] mt-[3px]"><Chart s={verantwortliche} /></div>
              </div>
              <div className="flex gap-[49px]">
                <PivotTable p={pivotA} />
                <PivotTable p={pivotB} />
              </div>
            </div>
          </div>
        </div>
        <div className="w-[21px] bg-[#f3f3f3] pl-[3px] pt-[3px] shrink-0 flex flex-col">
          <div className="w-[15px] h-[15px] bg-white border border-[#ababab] flex items-center justify-center">
            <svg width="9" height="5" viewBox="0 0 9 5"><path d="M0 5h9L4.5 0z" fill="#777" /></svg>
          </div>
          <div className="w-[15px] h-[380px] bg-white border-x border-b border-[#ababab]" />
          <div className="w-[15px] h-[79px]" />
          <div className="w-[15px] h-[14px] bg-white border border-[#ababab] flex items-center justify-center">
            <svg width="9" height="5" viewBox="0 0 9 5"><path d="M0 0h9L4.5 5z" fill="#777" /></svg>
          </div>
        </div>
      </div>
      <SheetTabs />
      <StatusBar />
    </div>
  );
}
